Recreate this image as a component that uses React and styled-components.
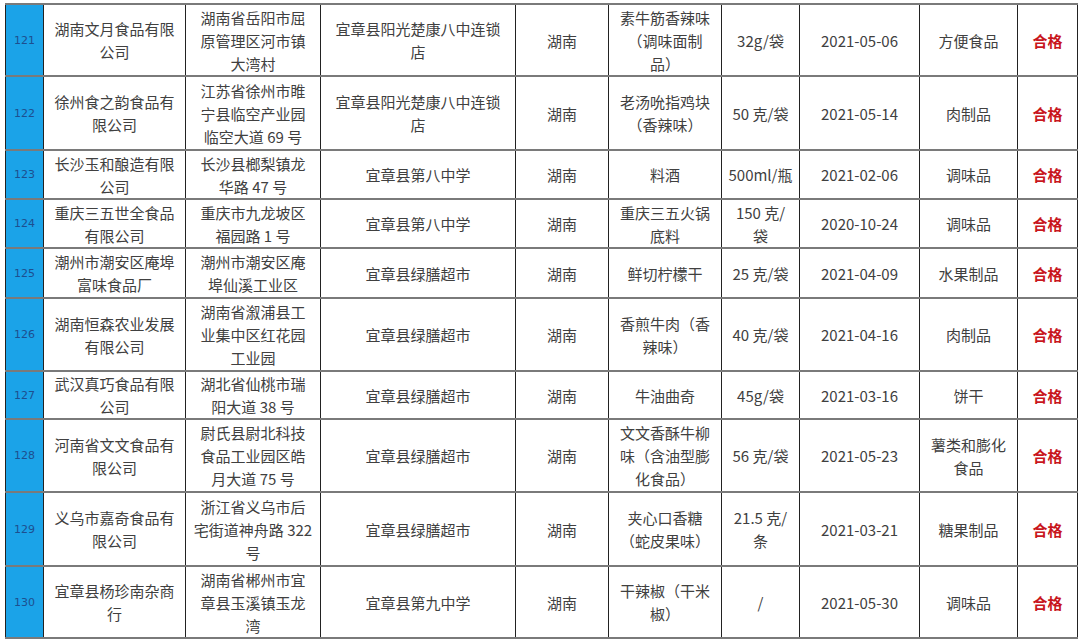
import React from "react"
import styled, { createGlobalStyle } from "styled-components"

const GlobalStyle = createGlobalStyle`
  html, body {
    margin: 0;
    padding: 0;
    background: #ffffff;
  }
`

const Page = styled.div`
  padding: 3px 0 0 5px;
  width: 1080px;
  height: 641px;
  box-sizing: border-box;
  overflow: hidden;
`

const Table = styled.table`
  border-collapse: collapse;
  table-layout: fixed;
  width: 1072px;
  font-family: "Noto Sans CJK SC", "Liberation Sans", sans-serif;
  font-size: 15px;
  color: #404040;
  border-top: 1px solid #333333;
  border-bottom: 1px solid #333333;
`

const Row = styled.tr`
  height: ${(p) => p.h}px;
`

const Cell = styled.td`
  padding: 0;
  text-align: center;
  vertical-align: middle;
  line-height: 23px;
  border-left: 1px solid #222222;
  border-right: 1px solid #222222;
  border-top: 2px solid #7a7a7a;
  border-bottom: 2px solid #7a7a7a;
  white-space: nowrap;
`

const NumCell = styled(Cell)`
  background: #1ba3e8;
  color: #1d4f8f;
  font-family: "DejaVu Sans", "Liberation Sans", sans-serif;
  font-size: 11px;
`

const PassCell = styled(Cell)`
  color: #c8161d;
  font-weight: 700;
`

const widths = [38, 142, 135, 195, 93, 113, 78, 120, 98, 60]

const rows = [
  [72, "121", "湖南文月食品有限|公司", "湖南省岳阳市屈|原管理区河市镇|大湾村", "宜章县阳光楚康八中连锁|店", "湖南", "素牛筋香辣味|（调味面制|品）", "32g/袋", "2021-05-06", "方便食品"],
  [74, "122", "徐州食之韵食品有|限公司", "江苏省徐州市睢|宁县临空产业园|临空大道 69 号", "宜章县阳光楚康八中连锁|店", "湖南", "老汤吮指鸡块|（香辣味）", "50 克/袋", "2021-05-14", "肉制品"],
  [49, "123", "长沙玉和酿造有限|公司", "长沙县榔梨镇龙|华路 47 号", "宜章县第八中学", "湖南", "料酒", "500ml/瓶", "2021-02-06", "调味品"],
  [49, "124", "重庆三五世全食品|有限公司", "重庆市九龙坡区|福园路 1 号", "宜章县第八中学", "湖南", "重庆三五火锅|底料", "150 克/|袋", "2020-10-24", "调味品"],
  [50, "125", "潮州市潮安区庵埠|富味食品厂", "潮州市潮安区庵|埠仙溪工业区", "宜章县绿膳超市", "湖南", "鲜切柠檬干", "25 克/袋", "2021-04-09", "水果制品"],
  [73, "126", "湖南恒森农业发展|有限公司", "湖南省溆浦县工|业集中区红花园|工业园", "宜章县绿膳超市", "湖南", "香煎牛肉（香|辣味）", "40 克/袋", "2021-04-16", "肉制品"],
  [48, "127", "武汉真巧食品有限|公司", "湖北省仙桃市瑞|阳大道 38 号", "宜章县绿膳超市", "湖南", "牛油曲奇", "45g/袋", "2021-03-16", "饼干"],
  [73, "128", "河南省文文食品有|限公司", "尉氏县尉北科技|食品工业园区皓|月大道 75 号", "宜章县绿膳超市", "湖南", "文文香酥牛柳|味（含油型膨|化食品）", "56 克/袋", "2021-05-23", "薯类和膨化|食品"],
  [74, "129", "义乌市嘉奇食品有|限公司", "浙江省义乌市后|宅街道神舟路 322|号", "宜章县绿膳超市", "湖南", "夹心口香糖|（蛇皮果味）", "21.5 克/|条", "2021-03-21", "糖果制品"],
  [72, "130", "宜章县杨珍南杂商|行", "湖南省郴州市宜|章县玉溪镇玉龙|湾", "宜章县第九中学", "湖南", "干辣椒（干米|椒）", "/", "2021-05-30", "调味品"],
]

const Lines = ({ text }) =>
  text.split("|").map((line, i) => (
    <React.Fragment key={i}>
      {i > 0 && <br />}
      {line}
    </React.Fragment>
  ))

const App = () => {
  return (
    <Page>
      <GlobalStyle />
      <Table>
        <colgroup>
          {widths.map((w, i) => (
            <col key={i} style={{ width: w }} />
          ))}
        </colgroup>
        <tbody>
          {rows.map(([h, num, ...cells]) => (
            <Row key={num} h={h}>
              <NumCell>{num}</NumCell>
              {cells.map((c, i) => (
                <Cell key={i}>
                  <Lines text={c} />
                </Cell>
              ))}
              <PassCell>合格</PassCell>
            </Row>
          ))}
        </tbody>
      </Table>
    </Page>
  )
}

export default App
